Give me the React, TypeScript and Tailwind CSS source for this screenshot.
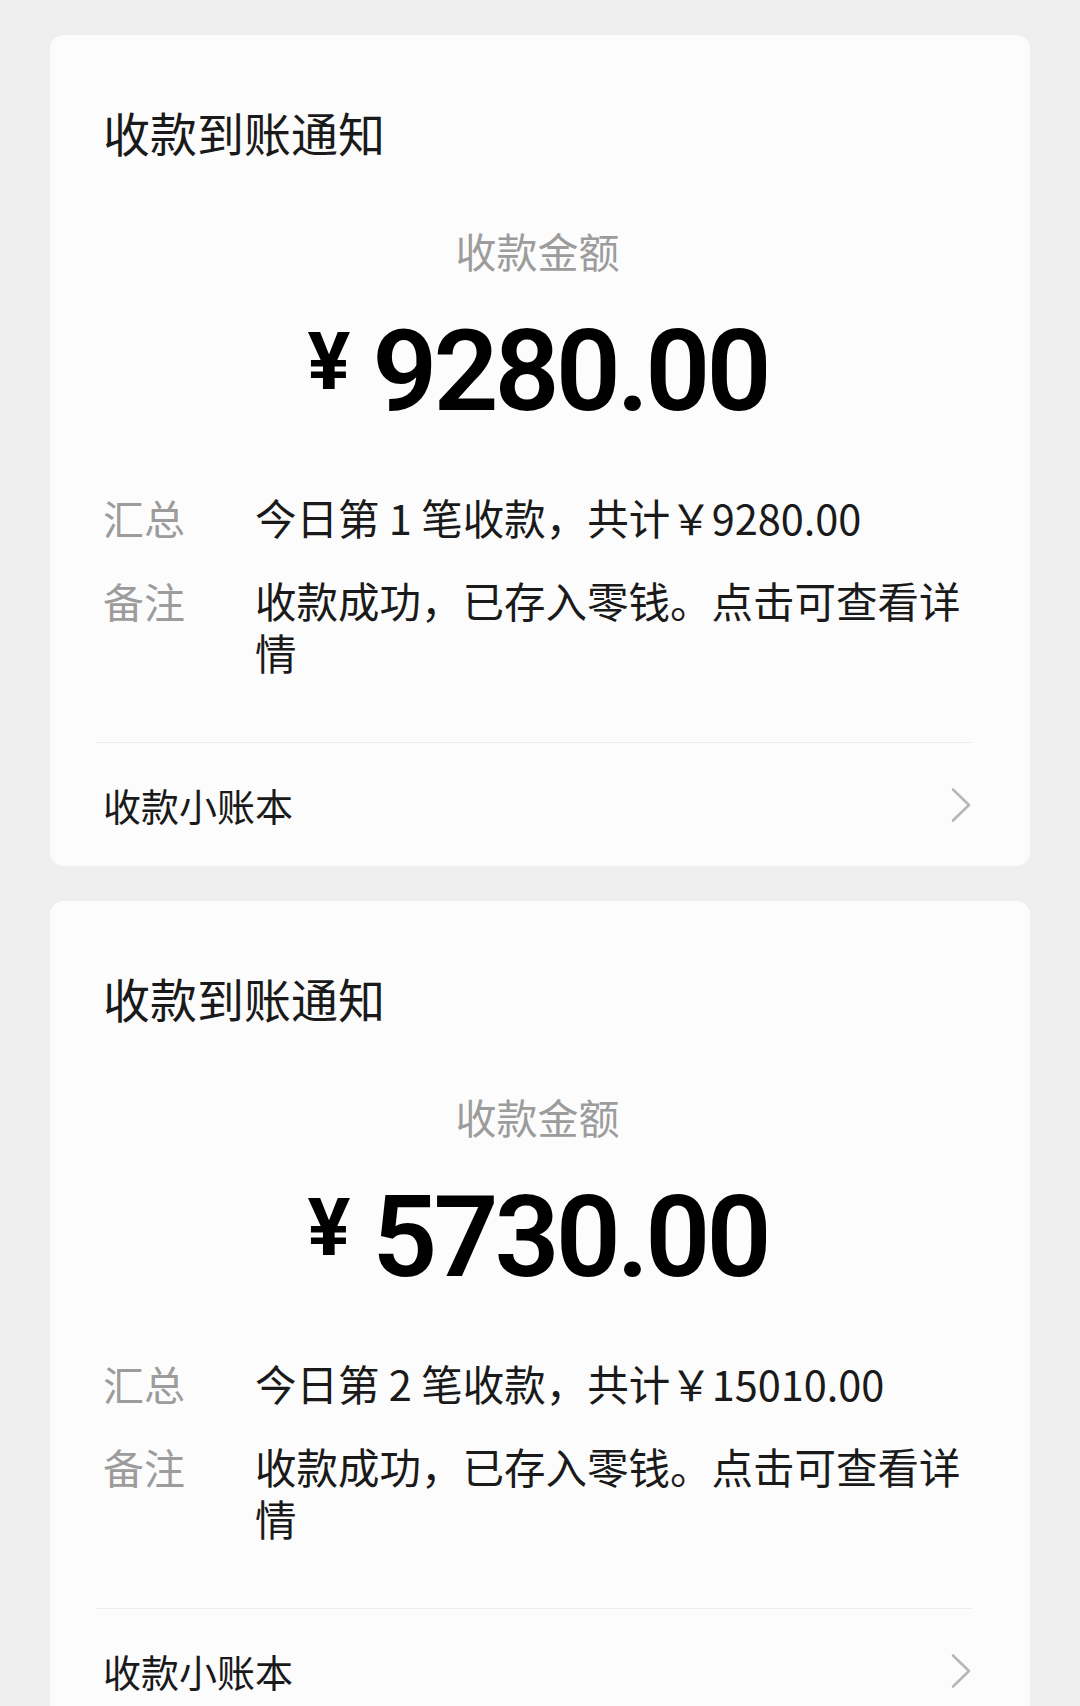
import React from 'react';

interface NoticeProps {
  amount: string;
  index: number;
  total: string;
}

const cjk = { fontFamily: '"Noto Sans CJK SC", "Noto Sans", sans-serif' };

const Chevron = () => (
  <svg width="22" height="36" viewBox="0 0 22 36" fill="none">
    <path d="M3 2.5 L19 18 L3 33.5" stroke="#b7b7b7" strokeWidth="2.6" strokeLinecap="round" strokeLinejoin="round" />
  </svg>
);

const NoticeCard = ({ amount, index, total }: NoticeProps) => {
  return <div className="rounded-[14px] bg-[#fcfcfc] pl-[53px] pr-[58px] pt-[68px] pb-[35px]" style={cjk}>
      <div className="text-[47px] leading-[58px] text-[#1a1a1a]">收款到账通知</div>
      <div className="mt-[63px] text-center text-[41px] leading-[52px] text-[#9c9c9c]">收款金额</div>
      <div className="mt-[38px] flex justify-center text-black" style={{ fontFamily: 'Roboto, "Liberation Sans", sans-serif' }}>
        <span className="mt-[8px] mr-[22px] text-[80px] leading-none font-bold">¥</span>
        <span className="text-[114px] leading-none font-semibold tracking-[-4px]">{amount}</span>
      </div>
      <div className="mt-[63px] flex flex-col gap-[31px] text-[41.5px] leading-[52px]">
        <div className="flex">
          <div className="w-[152px] shrink-0 text-[41px] text-[#9c9c9c]">汇总</div>
          <div className="w-[730px] text-[#1a1a1a]">今日第 {index} 笔收款，共计￥{total}</div>
        </div>
        <div className="flex">
          <div className="w-[152px] shrink-0 text-[41px] text-[#9c9c9c]">备注</div>
          <div className="w-[730px] text-[#1a1a1a]">收款成功，已存入零钱。点击可查看详情</div>
        </div>
      </div>
      <div className="mt-[64px] -ml-[7px] h-px bg-[#ececec]" />
      <div className="mt-[36px] flex items-center justify-between">
        <span className="text-[38px] leading-[52px] text-[#1a1a1a]">收款小账本</span>
        <Chevron />
      </div>
    </div>;
};

const App = () => {
  return <div className="min-h-screen bg-[#efefef] px-[50px] pt-[35px] flex flex-col gap-[35px] overflow-hidden">
      <NoticeCard amount="9280.00" index={1} total="9280.00" />
      <NoticeCard amount="5730.00" index={2} total="15010.00" />
    </div>;
};

export default App;
